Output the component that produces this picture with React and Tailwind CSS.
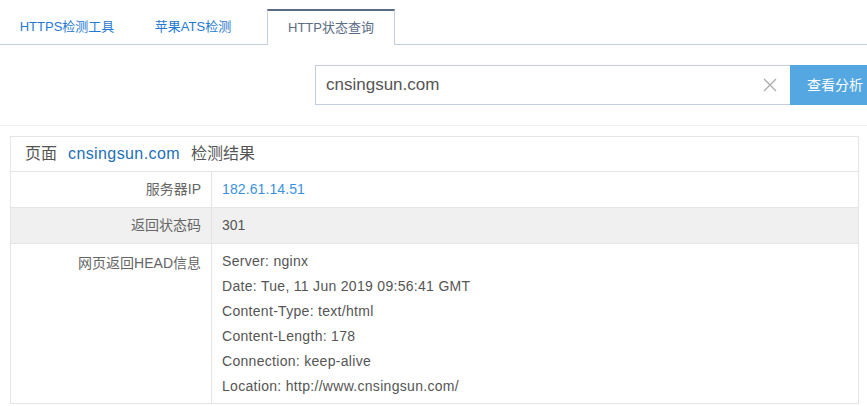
import React from "react";

const headLines = [
  "Server: nginx",
  "Date: Tue, 11 Jun 2019 09:56:41 GMT",
  "Content-Type: text/html",
  "Content-Length: 178",
  "Connection: keep-alive",
  "Location: http://www.cnsingsun.com/",
];

const font = { fontFamily: '"Liberation Sans", "Noto Sans CJK SC", sans-serif' };

const App = () => {
  return (
    <div className="w-[867px] h-[406px] bg-white overflow-hidden" style={font}>
      {/* tabs */}
      <div className="flex items-end h-[45px] border-b border-[#c5cde0] pl-[1px]">
        <div className="w-[132px] h-[35px] flex items-center justify-center text-[13px] text-[#1f7ad4]">
          HTTPS检测工具
        </div>
        <div className="w-[120px] h-[35px] flex items-center justify-center text-[13px] text-[#1f7ad4]">
          苹果ATS检测
        </div>
        <div className="w-[14px]" />
        <div className="w-[128px] h-[36px] -mb-px flex items-center justify-center text-[13px] text-[#5b6c86] bg-white border-t-2 border-t-[#5a6b85] border-x border-x-[#c5cde0]">
          HTTP状态查询
        </div>
      </div>

      {/* search */}
      <div className="h-[81px] border-b border-[#f0f0f0] flex items-start pt-[20px] pl-[315px]">
        <div className="flex-1 h-[40px] border border-[#c5cde0] border-r-0 flex items-center pl-[10px] pr-[13px]">
          <span className="flex-1 text-[17px] text-[#555]">cnsingsun.com</span>
          <svg width="14" height="14" viewBox="0 0 14 14" className="text-[#aaa]">
            <path d="M1 1L13 13M13 1L1 13" stroke="currentColor" strokeWidth="1.2" />
          </svg>
        </div>
        <div className="w-[77px] h-[40px] bg-[#55a7e1] text-white text-[14px] flex items-center pl-[17px] whitespace-nowrap">
          查看分析
        </div>
      </div>

      {/* result */}
      <div className="mx-[10px] mt-[10px] w-[849px] border border-[#e5e5e5] text-[14px]">
        <div className="h-[35px] flex items-center pl-[14px] text-[16px] text-[#555] border-b border-[#e5e5e5]">
          <span>页面</span>
          <span className="ml-[11px] text-[#2170b8] tracking-[0.4px]">cnsingsun.com</span>
          <span className="ml-[11px]">检测结果</span>
        </div>
        <div className="flex h-[36px] border-b border-[#e5e5e5]">
          <div className="w-[201px] border-r border-[#e5e5e5] flex items-center justify-end pr-[10px] text-[#666]">
            服务器IP
          </div>
          <div className="flex items-center pl-[10px] text-[#3b91df] tracking-[0.1px]">182.61.14.51</div>
        </div>
        <div className="flex h-[36px] border-b border-[#e5e5e5] bg-[#f0f0f0]">
          <div className="w-[201px] border-r border-[#e5e5e5] flex items-center justify-end pr-[10px] text-[#666]">
            返回状态码
          </div>
          <div className="flex items-center pl-[10px] text-[#555]">301</div>
        </div>
        <div className="flex">
          <div className="w-[201px] border-r border-[#e5e5e5] flex justify-end pr-[10px] pt-[7px] text-[#666] leading-[25px]">
            网页返回HEAD信息
          </div>
          <div className="pl-[10px] pt-[5px] pb-[4px] text-[#555] leading-[25px] tracking-[0.3px]">
            {headLines.map((line) => (
              <div key={line}>{line}</div>
            ))}
          </div>
        </div>
      </div>
    </div>
  );
};

export default App;
